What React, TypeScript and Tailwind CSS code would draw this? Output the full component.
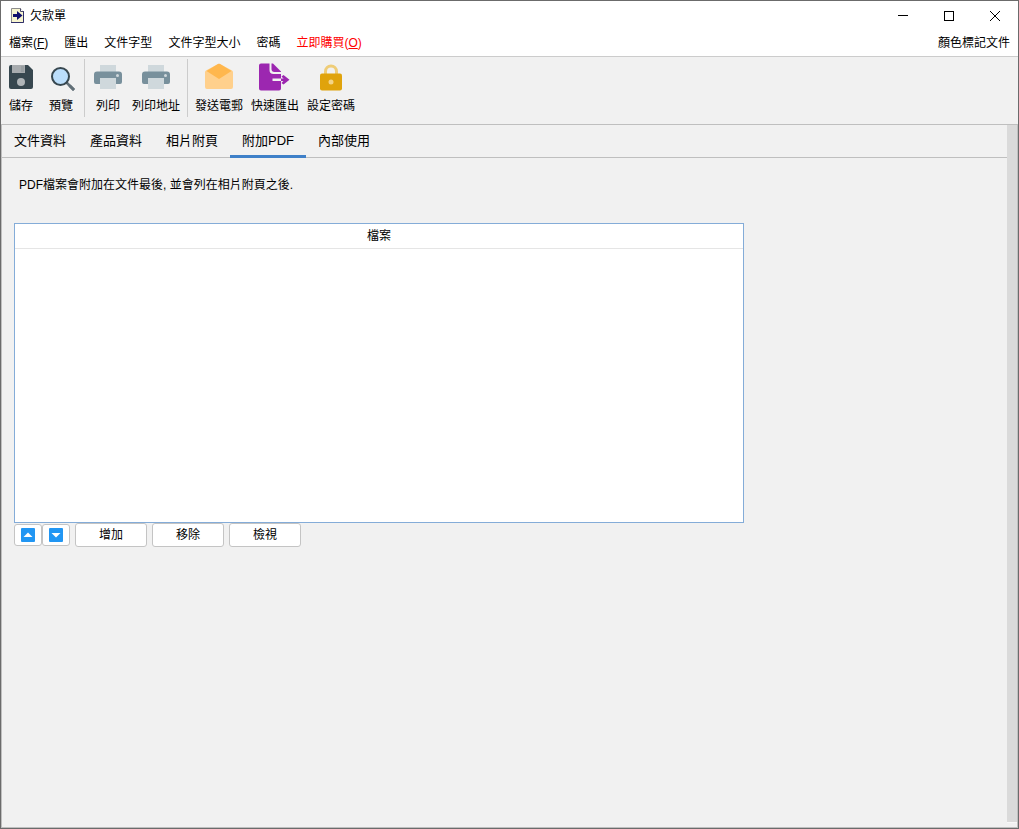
import { useState, type ReactNode } from "react";
import { clsx } from "clsx";

interface ToolButtonProps {
  label: string;
  children: ReactNode;
}

function AppIcon() {
  return (
    <svg width="14" height="16" viewBox="0 0 14 16" aria-hidden="true">
      <path d="M0.5 0.5h9l3 3v11h-12z" fill="#f7f5d0" stroke="#8c8c8c" />
      <path d="M9.500 0.5v3h3.500" fill="#fff" stroke="#4a4a6a" />
      <path d="M12.500 3.500v11H0" fill="none" stroke="#30306a" />
      <path d="M2 6h4V3l5.500 4.500L6 12V9H2z" fill="#10106e" />
    </svg>
  );
}

function SaveIcon() {
  return (
    <svg width="32" height="32" viewBox="0 0 32 32" aria-hidden="true">
      <path d="M6 4h17l5 5v17a2 2 0 0 1-2 2H6a2 2 0 0 1-2-2V6a2 2 0 0 1 2-2z" fill="#37474f" />
      <path d="M7 4h13v8H7z" fill="#a7abae" />
      <path d="M16 5h3v6h-3z" fill="#37474f" fillOpacity="0.12" />
      <circle cx="16" cy="21" r="4" fill="#b0b5b8" />
    </svg>
  );
}

function PreviewIcon() {
  return (
    <svg width="32" height="32" viewBox="0 0 32 32" aria-hidden="true">
      <path d="M21 21l8 8" stroke="#616f77" strokeWidth="2.500" />
      <path d="M24.500 24.500l4.500 4.500" stroke="#616f77" strokeWidth="3" />
      <circle cx="15.500" cy="15.500" r="8.500" fill="#bbdefb" stroke="#37474f" strokeWidth="2" />
    </svg>
  );
}

function PrintIcon() {
  return (
    <svg width="32" height="32" viewBox="0 0 32 32" aria-hidden="true">
      <path d="M8 4h16v8H8z" fill="#cfd8dc" />
      <path d="M5 10.500h22a3 3 0 0 1 3 3v7.500a2 2 0 0 1-2 2H4a2 2 0 0 1-2-2v-7.500a3 3 0 0 1 3-3z" fill="#78909c" />
      <path d="M8 17h16v11H8z" fill="#cfd8dc" />
      <circle cx="25.500" cy="14.500" r="1.500" fill="#cfd8dc" />
    </svg>
  );
}

function MailIcon() {
  return (
    <svg width="32" height="32" viewBox="0 0 32 32" aria-hidden="true">
      <path d="M2 11q0-1 1-1.500L15 3q1-.5 2 0l12 6.500q1 .5 1 1.500v15a2 2 0 0 1-2 2H4a2 2 0 0 1-2-2z" fill="#ffd08c" />
      <path d="M15 3q1-.5 2 0l11.500 7L16 18 3.500 10z" fill="#ffb74d" />
    </svg>
  );
}

function ExportIcon() {
  return (
    <svg width="32" height="32" viewBox="0 0 32 32" aria-hidden="true">
      <path
        d="M2 2.500h8.500V9a4 4 0 0 0 4 4H22v4.500h-8.500v2.500H22v7.500a2 2 0 0 1-2 2H2a2 2 0 0 1-2-2v-23a2 2 0 0 1 2-2z"
        fill="#9c27b0"
      />
      <path d="M12.500 2.500h1.500L22 10.500V11h-6.500a3 3 0 0 1-3-3z" fill="#9c27b0" />
      <path d="M22 17.500h5V20h-5z" fill="#9c27b0" />
      <path d="M22.500 15.500l2-1.500 6 4.750-6 4.750-2-1.500 3-3.250z" fill="#9c27b0" />
    </svg>
  );
}

function LockIcon() {
  return (
    <svg width="32" height="32" viewBox="0 0 32 32" aria-hidden="true">
      <path d="M10.500 13v-2.500a5.500 5.500 0 0 1 11 0V13" fill="none" stroke="#efcd78" strokeWidth="3" />
      <rect x="5" y="12.500" width="22" height="17" rx="2" fill="#e0a30c" />
      <circle cx="16" cy="21" r="2.500" fill="#f3d488" />
    </svg>
  );
}

function ArrowIcon({ down = false }: { down?: boolean }) {
  return (
    <svg width="14" height="14" viewBox="0 0 14 14" aria-hidden="true">
      <rect width="14" height="14" rx="1" fill="#2196f3" />
      <path d={down ? "M2.500 5h9L7 9.500z" : "M2.500 9h9L7 4.500z"} fill="#fff" />
    </svg>
  );
}

function ToolButton({ label, children }: ToolButtonProps) {
  return (
    <button type="button" className="flex flex-col items-center gap-[5px] px-1 pt-1">
      <span className="size-8">{children}</span>
      <span className="whitespace-nowrap leading-4">{label}</span>
    </button>
  );
}

function ToolSeparator() {
  return <div className="mx-[3px] mt-0.5 h-[58px] w-px bg-[#cccccc]" />;
}

function PushButton({ children }: { children: ReactNode }) {
  return (
    <button type="button" className="h-6 w-18 rounded-[3px] border border-[#c4c4c4] bg-white leading-4">
      {children}
    </button>
  );
}

function TitleBar() {
  return (
    <header className="flex h-[29px] items-center pl-[10px]">
      <AppIcon />
      <h1 className="ml-[5px] flex-1 leading-4">欠款單</h1>
      <button type="button" aria-label="最小化" className="flex h-full w-[46px] items-center justify-center">
        <svg width="10" height="10" viewBox="0 0 10 10" shapeRendering="crispEdges">
          <path d="M0 4.500h10" stroke="#000" />
        </svg>
      </button>
      <button type="button" aria-label="最大化" className="flex h-full w-[46px] items-center justify-center">
        <svg width="10" height="10" viewBox="0 0 10 10" shapeRendering="crispEdges">
          <path d="M0.500 0.500h9v9h-9z" fill="none" stroke="#000" />
        </svg>
      </button>
      <button type="button" aria-label="關閉" className="flex h-full w-[46px] items-center justify-center">
        <svg width="10" height="10" viewBox="0 0 10 10">
          <path d="M0 0l10 10M10 0L0 10" stroke="#000" />
        </svg>
      </button>
    </header>
  );
}

function MenuBar() {
  return (
    <nav className="flex h-[27px] items-center gap-4 border-b border-[#cccccc] px-2 leading-4">
      <button type="button">
        檔案(<u>F</u>)
      </button>
      <button type="button">匯出</button>
      <button type="button">文件字型</button>
      <button type="button">文件字型大小</button>
      <button type="button">密碼</button>
      <button type="button" className="text-[#ff0000]">
        立即購買(<u>O</u>)
      </button>
      <button type="button" className="ml-auto">
        顏色標記文件
      </button>
    </nav>
  );
}

const TABS = ["文件資料", "產品資料", "相片附頁", "附加PDF", "內部使用"];

export default function App() {
  const [activeTab, setActiveTab] = useState("附加PDF");

  return (
    <div className="flex min-h-screen flex-col border border-[#6b6b6b] bg-white font-['Liberation_Sans','Noto_Sans_CJK_TC',sans-serif] text-xs text-black">
      <TitleBar />
      <MenuBar />

      <div className="flex h-17 border-b border-[#bfbfbf] bg-[#f1f1f1]">
        <ToolButton label="儲存">
          <SaveIcon />
        </ToolButton>
        <ToolButton label="預覽">
          <PreviewIcon />
        </ToolButton>
        <ToolSeparator />
        <ToolButton label="列印">
          <PrintIcon />
        </ToolButton>
        <ToolButton label="列印地址">
          <PrintIcon />
        </ToolButton>
        <ToolSeparator />
        <ToolButton label="發送電郵">
          <MailIcon />
        </ToolButton>
        <ToolButton label="快速匯出">
          <ExportIcon />
        </ToolButton>
        <ToolButton label="設定密碼">
          <LockIcon />
        </ToolButton>
      </div>

      <div className="flex flex-1 border-x border-b border-[#bfbfbf] bg-[#f1f1f1]">
        <main className="min-w-0 flex-1">
          <div role="tablist" className="flex h-[33px] border-b border-[#bfbfbf]">
            {TABS.map((tab) => (
              <button
                key={tab}
                type="button"
                role="tab"
                aria-selected={tab === activeTab}
                onClick={() => setActiveTab(tab)}
                className={clsx(
                  "h-[33px] w-19 border-b-3 pt-0.5 text-[13px] leading-5",
                  tab === activeTab ? "border-[#3f80c8]" : "border-transparent",
                )}
              >
                {tab}
              </button>
            ))}
          </div>

          <div role="tabpanel" className="px-3">
            <p className="mt-[19px] pl-[5px] leading-4">PDF檔案會附加在文件最後, 並會列在相片附頁之後.</p>

            <div className="mt-[30px] h-[300px] w-full max-w-[730px] border border-[#84acd8] bg-white">
              <table className="w-full border-separate border-spacing-0">
                <thead>
                  <tr>
                    <th scope="col" className="h-[25px] border-b border-[#e5e5e5] p-0 font-normal leading-4">
                      檔案
                    </th>
                  </tr>
                </thead>
                <tbody />
              </table>
            </div>

            <div className="flex items-center gap-[5px]">
              <div className="flex">
                <button
                  type="button"
                  aria-label="上移"
                  className="flex h-[22px] w-7 items-center justify-center rounded-[3px] border border-[#c4c4c4] bg-white"
                >
                  <ArrowIcon />
                </button>
                <button
                  type="button"
                  aria-label="下移"
                  className="flex h-[22px] w-7 items-center justify-center rounded-[3px] border border-[#c4c4c4] bg-white"
                >
                  <ArrowIcon down />
                </button>
              </div>
              <PushButton>增加</PushButton>
              <PushButton>移除</PushButton>
              <PushButton>檢視</PushButton>
            </div>
          </div>
        </main>

        <div className="mb-1 w-[10px] border-b border-[#f8f8f8] bg-[#dadada]" />
      </div>
    </div>
  );
}
